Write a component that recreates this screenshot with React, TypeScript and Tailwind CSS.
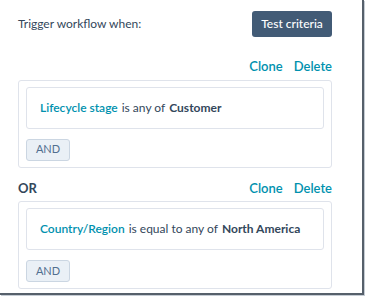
const font = { fontFamily: "Lato, 'Noto Sans', sans-serif" };

function Actions() {
  return (
    <div className="flex items-center gap-[11px] text-[13px] font-semibold text-[#0091ae]">
      <span>Clone</span>
      <span>Delete</span>
    </div>
  );
}

function Group({ prop, op, value }: { prop: string; op: string; value: string }) {
  return (
    <div className="rounded-[3px] border border-[#dfe3eb] bg-white px-[7px] py-[6px]">
      <div className="flex h-[42px] items-center whitespace-nowrap rounded-[3px] border border-[#dfe3eb] px-[13px] text-[12px] text-[#33475b]">
        <span className="font-semibold text-[#0091ae]">{prop}</span>
        <span className="ml-[4px]">{op}</span>
        <span className="ml-[4px] font-bold">{value}</span>
      </div>
      <button className="mt-[10px] flex h-[22px] w-[44px] items-center justify-center rounded-[3px] border border-[#cbd6e2] bg-[#eaf0f6] text-[11px] text-[#516f90]">
        AND
      </button>
    </div>
  );
}

export default function App() {
  return (
    <div className="h-[298px] w-[366px] bg-white" style={font}>
      <div className="h-[295px] w-[364px] border-r-2 border-b-2 border-[#56606b] bg-white pl-[18px] pr-[30px] pt-[11px] shadow-[1px_1px_0_#c5ccd4]">
        <div className="flex items-center justify-between">
          <span className="text-[12px] text-[#33475b]">Trigger workflow when:</span>
          <button className="flex h-[26px] w-[80px] items-center justify-center rounded-[3px] bg-[#425b76] text-[12px] font-medium text-white">
            Test criteria
          </button>
        </div>
        <div className="mt-[20px] flex justify-end">
          <Actions />
        </div>
        <div className="mt-[3px]">
          <Group prop="Lifecycle stage" op="is any of" value="Customer" />
        </div>
        <div className="mt-[11px] flex items-center justify-between">
          <span className="text-[13px] font-bold text-[#33475b]">OR</span>
          <Actions />
        </div>
        <div className="mt-[3px]">
          <Group prop="Country/Region" op="is equal to any of" value="North America" />
        </div>
      </div>
    </div>
  );
}
